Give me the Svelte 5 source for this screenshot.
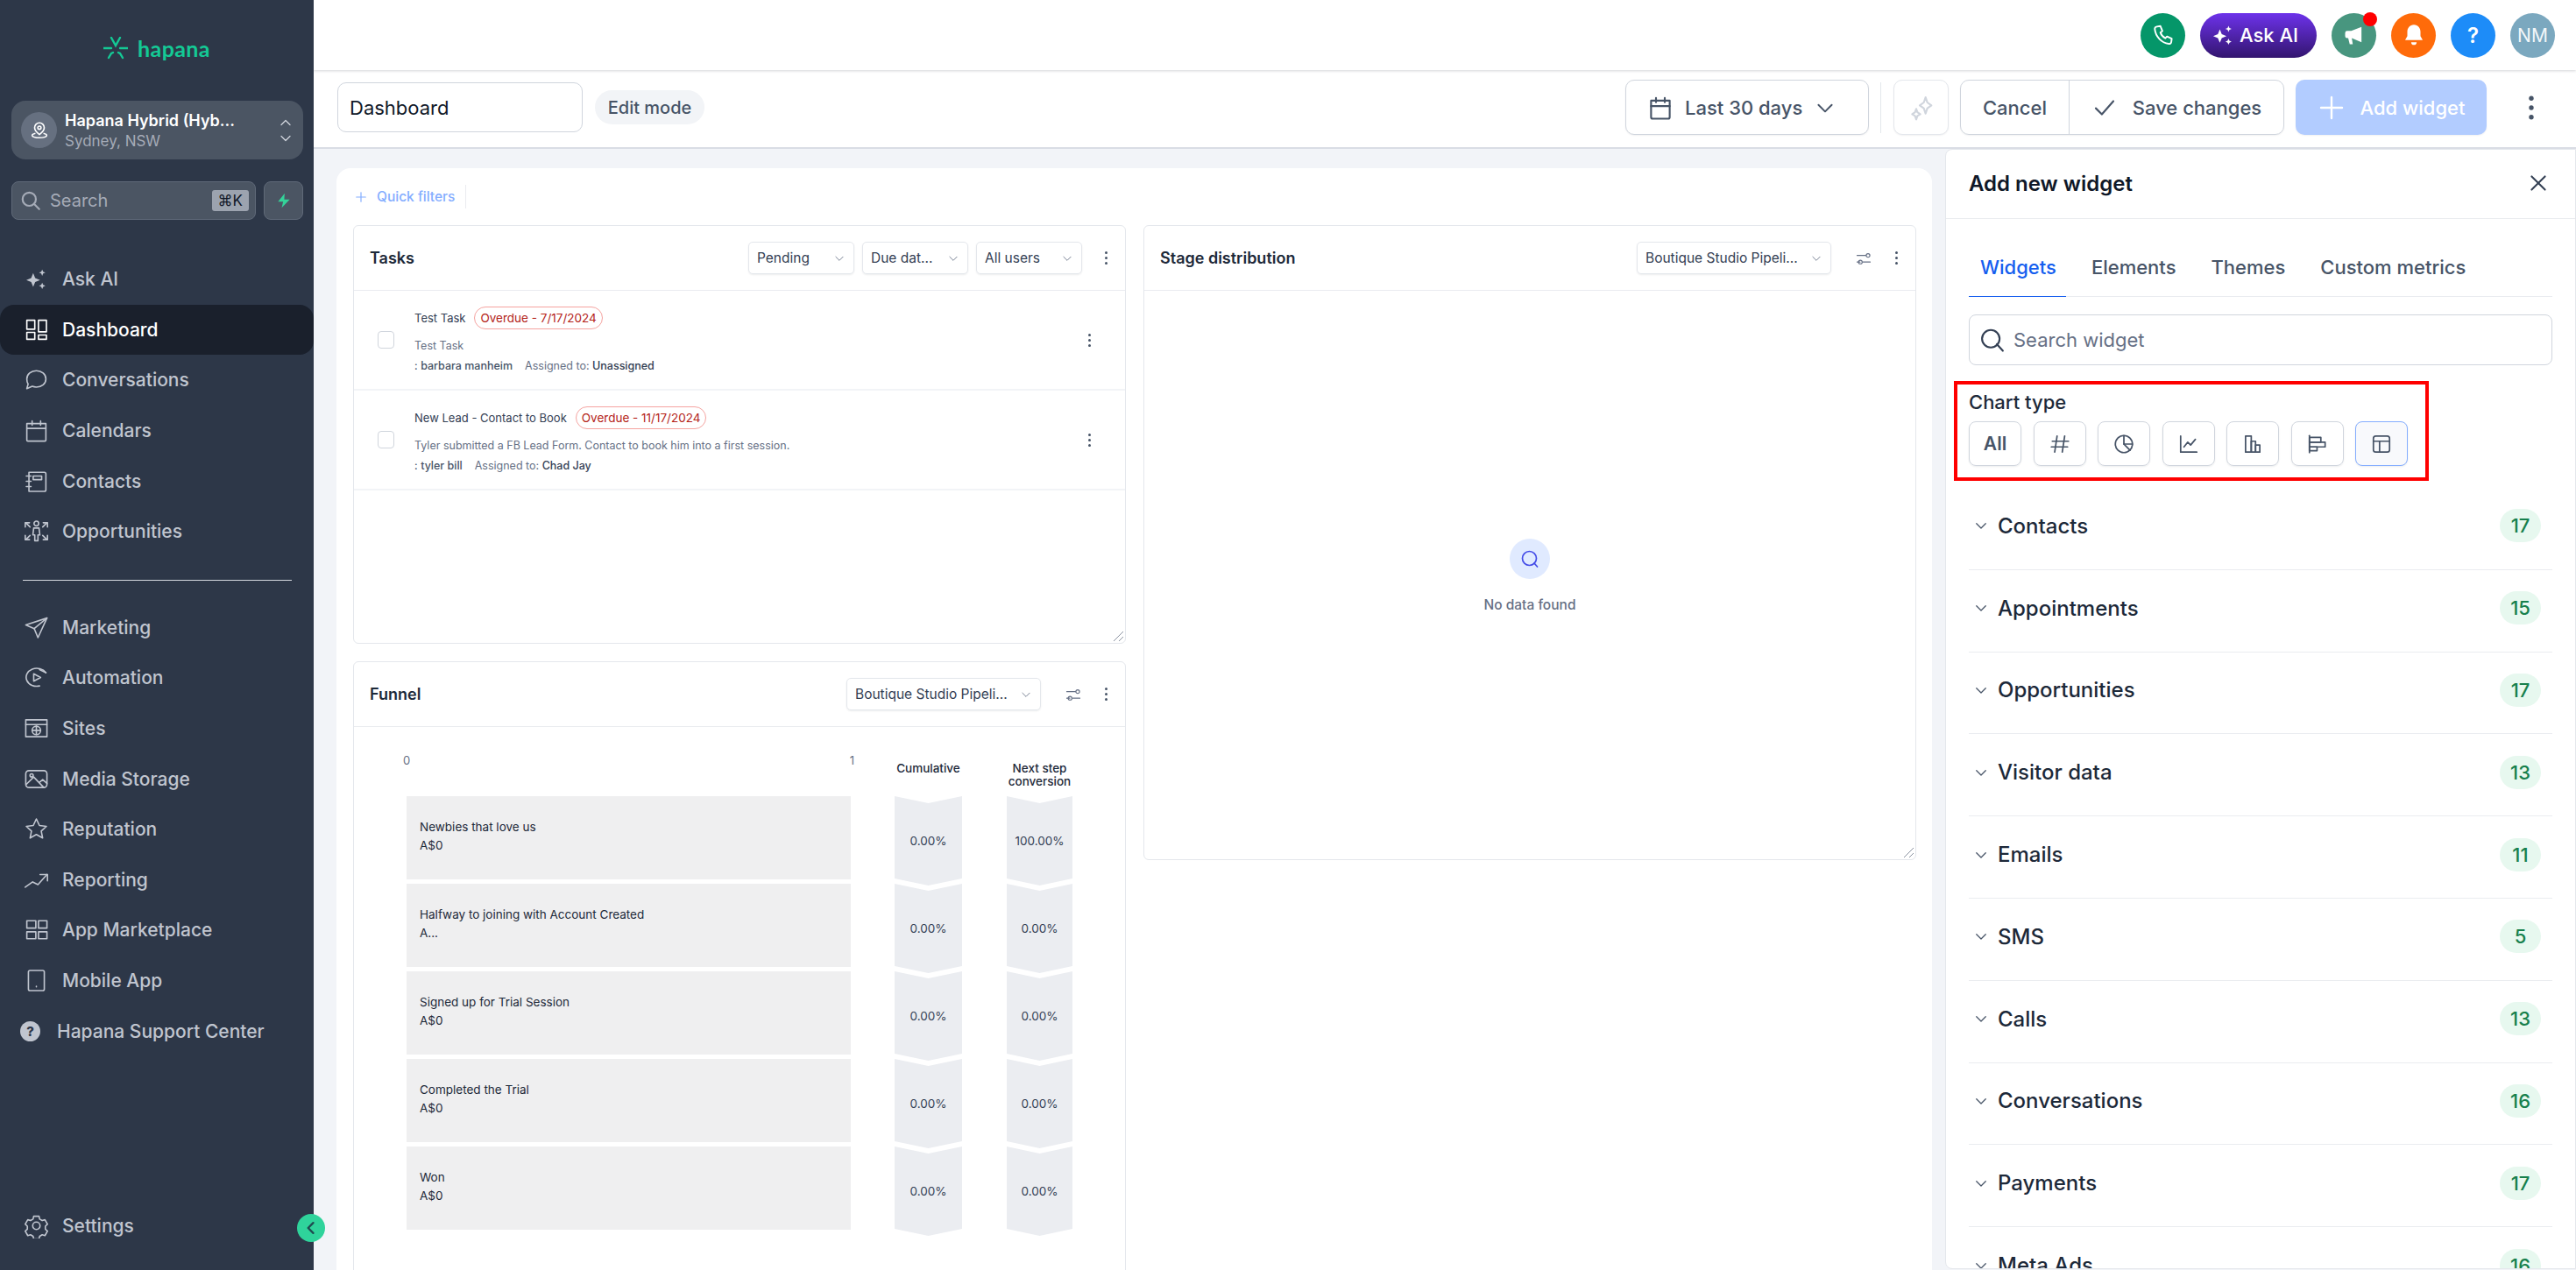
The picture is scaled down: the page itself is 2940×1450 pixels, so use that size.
<script>
  const navTop = [
    { label: "Ask AI", fill: true, paths: ["M9 6.5l1.9 4.6 4.6 1.9-4.6 1.9L9 19.5l-1.9-4.6L2.5 13l4.6-1.9z", "M17.5 3l.9 2.1 2.1.9-2.1.9-.9 2.1-.9-2.1-2.1-.9 2.1-.9z", "M17.5 15.5l.9 2.1 2.1.9-2.1.9-.9 2.1-.9-2.1-2.1-.9 2.1-.9z"] },
    { label: "Dashboard", active: true, paths: ["M3 3h7.5v8.5H3z", "M14 3h7.5v11H14z", "M3 14.5h7.5V21H3z", "M14 17h7.5v4H14z"] },
    { label: "Conversations", paths: ["M12 3.5c5 0 9 3.4 9 7.8s-4 7.7-9 7.7c-1.4 0-2.7-.2-3.9-.7L3 20.5l1.2-4.4C3.400 14.800 3 13.200 3 11.300 3 6.900 7 3.500 12 3.500z"] },
    { label: "Calendars", paths: ["M3 5.500h18v15.500a1 1 0 0 1-1 1H4a1 1 0 0 1-1-1z", "M3 10h18", "M8 3v4", "M16 3v4"] },
    { label: "Contacts", paths: ["M5 3.500h14.500a1.500 1.500 0 0 1 1.500 1.500v15a1.500 1.500 0 0 1-1.500 1.500H5z", "M9 7h8v3.500H9z", "M2.500 7H7", "M2.500 12H7", "M2.500 17H7"] },
    { label: "Opportunities", paths: ["M12 2.500a2.200 2.200 0 1 0 0 4.400 2.200 2.200 0 0 0 0-4.400z", "M9.500 9h5l.8 6.500h-1.800V21h-3v-5.500H8.700z", "M1.500 8V4h4", "M22.500 8V4h-4", "M1.500 16v4h4", "M22.500 16v4h-4", "M2 4l4 4", "M22 4l-4 4", "M2 20l4-4", "M22 20l-4-4"] },
  ];

  const navBottom = [
    { label: "Marketing", paths: ["M22 3L2 9.500l8 3.500 3.500 8.500z", "M22 3L10 13"] },
    { label: "Automation", paths: ["M21 7.500A10 8.500 0 1 0 15 20", "M9.500 8.500l6.500 3.500-6.500 3.500z", "M15 4.500l6 3"] },
    { label: "Sites", paths: ["M2 4h20v16H2z", "M2 8.500h20", "M12 10a4 4 0 1 0 0 8 4 4 0 0 0 0-8z", "M8 14h8", "M12 10v8"] },
    { label: "Media Storage", paths: ["M5 4h14a3 3 0 0 1 3 3v10a3 3 0 0 1-3 3H5a3 3 0 0 1-3-3V7a3 3 0 0 1 3-3z", "M2.500 17l7-7 9.500 10", "M15 15l3-2.500 4 3.500", "M7.500 7a1.500 1.500 0 1 0 0 3 1.500 1.500 0 0 0 0-3z"] },
    { label: "Reputation", paths: ["M12 2.500l2.900 6.200 6.600.8-4.900 4.500 1.300 6.500-5.900-3.300L6.100 20.500l1.300-6.500-4.900-4.500 6.600-.8z"] },
    { label: "Reporting", paths: ["M1.500 19l7-5 5 2.500L22 7", "M15.500 7H22.500V13"] },
    { label: "App Marketplace", paths: ["M3 3.500h8.500v7H3z", "M14 3.500h8v7h-8z", "M3 14h8.500v6.500H3z", "M14 14h8v6.500h-8z"] },
    { label: "Mobile App", paths: ["M6 2.500h12a1.500 1.500 0 0 1 1.500 1.500v16a1.500 1.500 0 0 1-1.500 1.500H6A1.500 1.500 0 0 1 4.500 20V4A1.500 1.500 0 0 1 6 2.500z", "M12 17.500v.5"] },
  ];

  const cog = ["M12 8.500a3.500 3.500 0 1 0 0 7 3.500 3.500 0 0 0 0-7z", "M9.500 3h5l.6 2.700 2.400 1.400 2.600-.8 2.400 4.200-2 1.900v2.800l2 1.900-2.400 4.200-2.600-.8-2.400 1.400-.6 2.600h-5l-.6-2.600-2.400-1.400-2.600.8-2.400-4.200 2-1.900v-2.800l-2-1.900 2.400-4.200 2.600.8 2.400-1.400z"];

  const chartIcons = [
    ["M9 3.500L6.500 20.500", "M17 3.500l-2.500 17", "M4 9h17", "M3 15h17"],
    ["M12 3a9 9 0 1 0 9 9h-9z", "M12 3a9 9 0 0 1 9 9", "M12 12l6.500 6.500"],
    ["M3.500 3.500v17h17", "M7 15l4-5 3 3 5-6"],
    ["M4.500 3.500h6v17h-6z", "M10.500 9h4.500v11.500h-4.500z", "M15 13h4.500v7.500H15z"],
    ["M3.500 3v18", "M3.500 5h12v5h-12z", "M3.500 10h16.500v5H3.500z", "M3.500 15h8v4h-8z"],
    ["M6 3.500h12A2.500 2.500 0 0 1 20.500 6v12a2.500 2.500 0 0 1-2.500 2.500H6A2.500 2.500 0 0 1 3.500 18V6A2.500 2.500 0 0 1 6 3.500z", "M3.500 9h17", "M10 9v11.500"],
  ];

  const sections = [
    ["Contacts", 17], ["Appointments", 15], ["Opportunities", 17], ["Visitor data", 13], ["Emails", 11],
    ["SMS", 5], ["Calls", 13], ["Conversations", 16], ["Payments", 17], ["Meta Ads", 16],
  ];

  const funnel = [
    { name: "Newbies that love us", value: "A$0", next: "100.00%" },
    { name: "Halfway to joining with Account Created", value: "A...", next: "0.00%" },
    { name: "Signed up for Trial Session", value: "A$0", next: "0.00%" },
    { name: "Completed the Trial", value: "A$0", next: "0.00%" },
    { name: "Won", value: "A$0", next: "0.00%" },
  ];

  const tasks = [
    { title: "Test Task", due: "Overdue - 7/17/2024", desc: "Test Task", who: "barbara manheim", to: "Unassigned" },
    { title: "New Lead - Contact to Book", due: "Overdue - 11/17/2024", desc: "Tyler submitted a FB Lead Form. Contact to book him into a first session.", who: "tyler bill", to: "Chad Jay" },
  ];

  const sliders = ["M3 8h12", "M3 17h4", "M11 17h10", "M18 5.500a2.500 2.500 0 1 0 0 5 2.500 2.500 0 0 0 0-5z", "M7.500 14.500a2.500 2.500 0 1 0 0 5 2.500 2.500 0 0 0 0-5z"];
  const calendar = ["M3.500 5.500h17v15a1.500 1.500 0 0 1-1.500 1.500H5a1.500 1.500 0 0 1-1.500-1.500z", "M3.500 10.500h17", "M8 3v4", "M16 3v4"];
</script>

{#snippet icon(paths, size = 24, sw = 1.6, fill = false)}
  <svg class="ico" width={size} height={size} viewBox="0 0 24 24" fill={fill ? "currentColor" : "none"} stroke={fill ? "none" : "currentColor"} stroke-width={sw} stroke-linecap="round" stroke-linejoin="round">
    {#each paths as d}<path {d} />{/each}
  </svg>
{/snippet}

{#snippet chevron(size = 14, sw = 1.5)}
  {@render icon(["M5 9l7 7 7-7"], size, sw)}
{/snippet}

{#snippet kebab()}
  <span class="kebab"><i></i><i></i><i></i></span>
{/snippet}

{#snippet navRow(item)}
  <div class="nav-item" class:active={item.active}>
    <span class="nav-icon">{@render icon(item.paths, 29, 1.35, item.fill)}</span>
    <span>{item.label}</span>
  </div>
{/snippet}

<div class="app">
  <aside class="sidebar">
    <div class="logo">
      <svg width="28" height="26" viewBox="0 0 28 26" fill="none" stroke="#14c995" stroke-width="2.400" stroke-linecap="round">
        <path d="M0 13h9" /><path d="M19 13h9" /><path d="M9 1l5 9 5-9" /><path d="M6 24l3-5 2-1" /><path d="M22 24l-3-5-2-1" />
      </svg>
      <span>hapana</span>
    </div>

    <div class="location">
      <span class="loc-avatar">
        <svg width="22" height="22" viewBox="0 0 24 24" fill="none" stroke="#fff" stroke-width="1.800" stroke-linejoin="round">
          <path d="M12 2.500a6 6 0 0 1 6 6c0 4-6 8.500-6 8.500s-6-4.500-6-8.500a6 6 0 0 1 6-6z" />
          <circle cx="12" cy="8.500" r="2" />
          <path d="M7 15.500c-3 .8-4.500 1.800-4 3 .6 1.400 4 2.500 9 2.500s8.400-1.100 9-2.500c.5-1.200-1-2.200-4-3" />
        </svg>
      </span>
      <div class="loc-text">
        <strong>Hapana Hybrid (Hyb...</strong>
        <span>Sydney, NSW</span>
      </div>
      <span class="loc-caret">
        {@render icon(["M6 15l6-6 6 6"], 20, 1.500)}
        {@render icon(["M6 9l6 6 6-6"], 20, 1.500)}
      </span>
    </div>

    <div class="search-row">
      <div class="side-search">
        {@render icon(["M10.500 3.500a7 7 0 1 0 0 14 7 7 0 0 0 0-14z", "M15.500 15.500l5.500 5.500"], 26, 2)}
        <span class="side-search-text">Search</span>
        <kbd>⌘K</kbd>
      </div>
      <div class="bolt">
        <svg width="20" height="20" viewBox="0 0 24 24" fill="#34d399"><path d="M13 2L4 13.500h7L9 22l11-11.500h-7.500z" /></svg>
      </div>
    </div>

    <nav class="nav first">
      {#each navTop as item}{@render navRow(item)}{/each}
    </nav>
    <div class="nav-divider"></div>
    <nav class="nav">
      {#each navBottom as item}{@render navRow(item)}{/each}
      <div class="nav-item">
        <span class="nav-icon help-icon">?</span>
        <span>Hapana Support Center</span>
      </div>
    </nav>

    <div class="nav settings">
      {@render navRow({ label: "Settings", paths: cog })}
    </div>
    <span class="collapse">{@render icon(["M15 5l-7 7 7 7"], 20, 2.800)}</span>
  </aside>

  <div class="main">
    <header class="topbar">
      <span class="round green">{@render icon(["M6 3l3.500-.5 2 5-2 1.500c.8 2.500 2.500 4.500 5 5.800l1.700-1.800 4.800 2.200-.5 3.500c-.2 1.200-1.300 2-2.500 1.800C10.500 19.500 4.500 13 3.800 5.500 3.700 4.300 4.800 3.200 6 3z"], 27, 1.700)}</span>
      <span class="ask-ai">
        {@render icon(navTop[0].paths, 28, 1, true)}
        Ask AI
      </span>
      <span class="round teal">
        {@render icon(["M19 4L9 8H5a2 2 0 0 0-2 2v3a2 2 0 0 0 2 2h1l1.500 6h3L9.500 15l9.500 4z", "M22 10v3"], 28, 1, true)}
        <b class="dot"></b>
      </span>
      <span class="round orange">{@render icon(["M12 2.500c-3.800 0-6 3-6 6.500v4l-2 3.500h16L18 13V9c0-3.500-2.200-6.500-6-6.500z", "M9.500 18.500h5a2.500 2.500 0 0 1-5 0z"], 30, 1, true)}</span>
      <span class="round blue">?</span>
      <span class="round avatar">NM</span>
    </header>

    <div class="toolbar">
      <div class="title-input">Dashboard</div>
      <span class="edit-pill">Edit mode</span>
      <div class="toolbar-spacer"></div>
      <div class="btn date">
        {@render icon(calendar, 30, 1.700)}
        <span>Last 30 days</span>
        {@render chevron(26, 1.800)}
      </div>
      <span class="tool-divider"></span>
      <div class="btn sparkle">
        <svg width="32" height="32" viewBox="0 0 24 24" fill="none" stroke="#d0d5dd" stroke-width="1.600" stroke-linejoin="round">
          <path d="M15.500 3l1.500 4.500L20.500 10 17 12.500 15.500 17 14 12.500 10.500 10 14 7.500z" />
          <path d="M7.500 13l1 2.800L11 17.500 8.500 19l-1 3-1-3L4 17.500l2.500-1.700z" />
        </svg>
      </div>
      <div class="btn-group">
        <div class="btn-part cancel">Cancel</div>
        <div class="btn-part">
          {@render icon(["M4 12.500l5.500 5.500L20 6"], 30, 1.700)}
          Save changes
        </div>
      </div>
      <div class="btn-add">
        {@render icon(["M12 3v18", "M3 12h18"], 32, 1.800)}
        Add widget
      </div>
      <span class="toolbar-kebab">{@render kebab()}</span>
    </div>

    <div class="body">
      <section class="canvas">
        <div class="quick">
          <span class="quick-label">{@render icon(["M12 5v14", "M5 12h14"], 18, 1.600)} Quick filters</span>
          <span class="quick-sep"></span>
        </div>
        <div class="grid">
          <div class="col">
            <article class="card tasks-card">
              <div class="card-head">
                <h3>Tasks</h3>
                <span class="sel s1"><span>Pending</span>{@render chevron()}</span>
                <span class="sel s2"><span>Due dat...</span>{@render chevron()}</span>
                <span class="sel s3"><span>All users</span>{@render chevron()}</span>
                <span class="head-kebab">{@render kebab()}</span>
              </div>
              {#each tasks as t}
                <div class="task">
                  <span class="check"></span>
                  <div class="task-body">
                    <div class="task-title">{t.title}<span class="due">{t.due}</span></div>
                    <div class="task-desc">{t.desc}</div>
                    <div class="task-meta">: <b>{t.who}</b><span class="assigned">Assigned to: <b>{t.to}</b></span></div>
                  </div>
                  {@render kebab()}
                </div>
              {/each}
              <svg class="resize" width="14" height="14" viewBox="0 0 14 14" stroke="#8a92a0" stroke-width="1"><path d="M13 2L2 13" /><path d="M13 8l-5 5" /></svg>
            </article>

            <article class="card funnel-card">
              <div class="card-head">
                <h3>Funnel</h3>
                <span class="sel pipe"><span>Boutique Studio Pipeli...</span>{@render chevron()}</span>
                <span class="head-icon">{@render icon(sliders, 20, 1.400)}</span>
                <span class="head-kebab">{@render kebab()}</span>
              </div>
              <div class="funnel">
                <div class="funnel-bars">
                  <div class="axis"><span>0</span><span>1</span></div>
                  {#each funnel as f}
                    <div class="bar"><span>{f.name}</span><span>{f.value}</span></div>
                  {/each}
                </div>
                <div class="step-col">
                  <div class="step-head">Cumulative</div>
                  {#each funnel as f}
                    <div class="step">0.00%</div>
                  {/each}
                </div>
                <div class="step-col next">
                  <div class="step-head">Next step<br />conversion</div>
                  {#each funnel as f}
                    <div class="step">{f.next}</div>
                  {/each}
                </div>
              </div>
            </article>
          </div>

          <article class="card stage-card">
            <div class="card-head">
              <h3>Stage distribution</h3>
              <span class="sel pipe"><span>Boutique Studio Pipeli...</span>{@render chevron()}</span>
              <span class="head-icon">{@render icon(sliders, 20, 1.400)}</span>
              <span class="head-kebab">{@render kebab()}</span>
            </div>
            <div class="empty">
              <span class="empty-icon">{@render icon(["M11.500 3.500a8 8 0 1 0 0 16 8 8 0 0 0 0-16z", "M17 17l3.500 4"], 24, 1.700)}</span>
              <span class="empty-text">No data found</span>
            </div>
            <svg class="resize" width="14" height="14" viewBox="0 0 14 14" stroke="#8a92a0" stroke-width="1"><path d="M13 2L2 13" /><path d="M13 8l-5 5" /></svg>
          </article>
        </div>
      </section>

      <aside class="panel">
        <div class="panel-head">
          <h2>Add new widget</h2>
          {@render icon(["M5 5l14 14", "M19 5L5 19"], 26, 1.900)}
        </div>
        <div class="panel-body">
          <div class="tabs">
            <span class="tab on">Widgets</span>
            <span class="tab">Elements</span>
            <span class="tab">Themes</span>
            <span class="tab">Custom metrics</span>
          </div>
          <div class="widget-search">
            {@render icon(["M10.500 3a8 8 0 1 0 0 16 8 8 0 0 0 0-16z", "M16 16l5.500 6"], 30, 1.700)}
            <span>Search widget</span>
          </div>
          <div class="chart-type">
            <div class="chart-label">Chart type</div>
            <div class="chart-btns">
              <span class="chart-btn">All</span>
              {#each chartIcons as p, i}
                <span class="chart-btn" class:picked={i === 5}>{@render icon(p, 26, 1.600)}</span>
              {/each}
            </div>
          </div>
          <div class="sections">
            {#each sections as [name, count]}
              <div class="section">
                {@render chevron(18, 1.700)}
                <span class="section-name">{name}</span>
                <span class="count">{count}</span>
              </div>
            {/each}
          </div>
        </div>
      </aside>
    </div>
  </div>
</div>

<style>
  :global(body) {
    margin: 0;
    font-family: Inter, "Liberation Sans", sans-serif;
    color: #101828;
  }

  .ico {
    display: block;
    flex: none;
  }

  .app {
    display: flex;
    width: 2940px;
    height: 1450px;
    overflow: hidden;
    background: #f2f4f8;
  }

  /* sidebar */
  .sidebar {
    position: relative;
    flex: 0 0 358px;
    background: #2d3748;
    box-sizing: border-box;
    display: flex;
    flex-direction: column;
    z-index: 2;
  }

  .logo {
    display: flex;
    align-items: center;
    justify-content: center;
    gap: 11px;
    height: 115px;
    padding-bottom: 6px;
    box-sizing: border-box;
    color: #14c995;
    font-family: Lato, Inter, sans-serif;
    font-weight: 700;
    font-size: 25px;
    letter-spacing: 0.4px;
  }

  .location {
    display: flex;
    align-items: center;
    margin: 0 12px 0 13px;
    height: 67px;
    padding: 0 14px 0 11px;
    background: #4b5563;
    border-radius: 16px;
  }

  .loc-avatar {
    flex: none;
    width: 41px;
    height: 41px;
    border-radius: 50%;
    background: #667080;
    display: flex;
    align-items: center;
    justify-content: center;
  }

  .loc-text {
    flex: 1;
    margin-left: 9px;
    display: flex;
    flex-direction: column;
    min-width: 0;
  }

  .loc-text strong {
    color: #fff;
    font-size: 18px;
    font-weight: 600;
    line-height: 24px;
    white-space: nowrap;
  }

  .loc-text span {
    color: #a5abb7;
    font-size: 17px;
    line-height: 22px;
  }

  .loc-caret {
    display: flex;
    flex-direction: column;
    color: #d0d5dd;
    margin-right: -4px;
    gap: 0;
  }

  .loc-caret :global(svg) {
    margin: -1px 0;
  }

  .search-row {
    display: flex;
    gap: 9px;
    margin: 25px 12px 0 13px;
    height: 44px;
  }

  .side-search {
    flex: 1;
    display: flex;
    align-items: center;
    box-sizing: border-box;
    background: #4b5563;
    border: 1px solid #5f6978;
    border-radius: 8px;
    padding: 0 7px 0 8px;
    color: #a5abb7;
  }

  .side-search-text {
    flex: 1;
    margin-left: 9px;
    font-size: 20px;
  }

  kbd {
    background: #9ca3af;
    color: #101828;
    font-family: Inter, "DejaVu Sans", sans-serif;
    font-size: 17px;
    border-radius: 3px;
    padding: 2px 7px;
  }

  .bolt {
    flex: 0 0 45px;
    box-sizing: border-box;
    background: #4b5563;
    border: 1px solid #5f6978;
    border-radius: 8px;
    display: flex;
    align-items: center;
    justify-content: center;
  }

  .nav {
    display: flex;
    flex-direction: column;
    gap: 0;
  }

  .nav.first {
    margin-top: 39px;
  }

  .nav-item {
    display: flex;
    align-items: center;
    height: 57.600px;
    padding-left: 27px;
    gap: 15px;
    color: #c0c5cf;
    font-size: 21px;
    font-weight: 500;
    border-radius: 16px;
  }

  .nav-item.active {
    background: #1a202c;
    color: #fff;
  }

  .nav-icon {
    width: 29px;
    display: flex;
    justify-content: center;
  }

  .help-icon {
    margin-left: -4px;
    margin-right: 4px;
    flex: none;
    width: 23px;
    height: 23px;
    box-sizing: border-box;
    border-radius: 50%;
    background: #c0c5cf;
    color: #2d3748;
    font-size: 15px;
    font-weight: 800;
    align-items: center;
  }

  .nav-divider {
    height: 1px;
    margin: 26px 25px 25px 26px;
    background: #d5d9e0;
  }

  .settings {
    margin-top: auto;
    margin-bottom: 22px;
  }

  .collapse {
    position: absolute;
    left: 339px;
    top: 1386px;
    width: 32px;
    height: 32px;
    border-radius: 50%;
    background: #2fd39b;
    color: #1f4b50;
    display: flex;
    align-items: center;
    justify-content: center;
  }

  /* main column */
  .main {
    flex: 1;
    min-width: 0;
    display: flex;
    flex-direction: column;
  }

  .topbar {
    flex: 0 0 80px;
    box-sizing: border-box;
    background: #fff;
    box-shadow: 0 1px 3px rgba(16, 24, 40, 0.18);
    display: flex;
    align-items: center;
    justify-content: flex-end;
    gap: 17px;
    padding-right: 24px;
    position: relative;
    z-index: 1;
  }

  .round {
    position: relative;
    width: 51px;
    height: 51px;
    border-radius: 50%;
    display: flex;
    align-items: center;
    justify-content: center;
    color: #fff;
    font-size: 21px;
  }

  .green {
    background: #059669;
  }

  .teal {
    background: #48967f;
  }

  .orange {
    background: #ff6b0a;
  }

  .blue {
    background: #1d8cf8;
    font-weight: 600;
    font-size: 24px;
  }

  .avatar {
    background: #7ba8bf;
    color: #f2f6f9;
  }

  .dot {
    position: absolute;
    top: -1px;
    right: -1px;
    width: 16px;
    height: 16px;
    border-radius: 50%;
    background: #f00;
  }

  .ask-ai {
    display: flex;
    align-items: center;
    gap: 5px;
    height: 51px;
    width: 133px;
    box-sizing: border-box;
    padding-left: 12px;
    border-radius: 26px;
    color: #fff;
    font-size: 22px;
    font-weight: 500;
    background: linear-gradient(180deg, #6d32ea 0%, #33156f 100%);
  }

  .toolbar {
    flex: 0 0 90px;
    box-sizing: border-box;
    background: #fff;
    border-bottom: 2px solid #d9dde5;
    display: flex;
    align-items: center;
    padding: 0 0 3px 27px;
  }

  .title-input {
    box-sizing: border-box;
    width: 280px;
    height: 57px;
    border: 1px solid #d0d5dd;
    border-radius: 10px;
    padding-left: 13px;
    display: flex;
    align-items: center;
    font-size: 22px;
    color: #101828;
  }

  .edit-pill {
    margin-left: 14px;
    height: 39px;
    width: 125px;
    border-radius: 20px;
    background: #f2f4f7;
    color: #475467;
    font-size: 20px;
    font-weight: 500;
    display: flex;
    align-items: center;
    justify-content: center;
  }

  .toolbar-spacer {
    flex: 1;
  }

  .btn {
    box-sizing: border-box;
    height: 63px;
    border: 1px solid #d0d5dd;
    border-radius: 10px;
    display: flex;
    align-items: center;
    background: #fff;
    color: #475467;
    font-size: 22px;
    font-weight: 500;
    box-shadow: 0 1px 2px rgba(16, 24, 40, 0.06);
  }

  .date {
    width: 278px;
    padding-left: 24px;
    gap: 13px;
  }

  .tool-divider {
    width: 1px;
    height: 58px;
    margin: 0 14px 0 13px;
    background: #e4e7ec;
  }

  .sparkle {
    width: 63px;
    justify-content: center;
    border-color: #e4e7ec;
  }

  .btn-group {
    margin-left: 13px;
    box-sizing: border-box;
    width: 370px;
    height: 63px;
    display: flex;
    border: 1px solid #d0d5dd;
    border-radius: 10px;
    color: #475467;
    font-size: 22px;
    font-weight: 500;
    box-shadow: 0 1px 2px rgba(16, 24, 40, 0.06);
  }

  .btn-part {
    flex: 1;
    display: flex;
    align-items: center;
    justify-content: center;
    gap: 17px;
  }

  .btn-part.cancel {
    flex: 0 0 123px;
    border-right: 1px solid #d0d5dd;
  }

  .btn-add {
    margin-left: 13px;
    width: 218px;
    height: 63px;
    border-radius: 10px;
    background: #b2ccff;
    color: #fff;
    font-size: 22px;
    font-weight: 500;
    display: flex;
    align-items: center;
    justify-content: center;
    gap: 17px;
    box-shadow: 0 1px 2px rgba(16, 24, 40, 0.06);
  }

  .toolbar-kebab {
    width: 102px;
    display: flex;
    justify-content: center;
    transform: scale(1.350);
  }

  .kebab {
    flex: none;
    display: flex;
    flex-direction: column;
    gap: 4px;
    width: 4px;
  }

  .kebab i {
    display: block;
    width: 4px;
    height: 4px;
    border-radius: 50%;
    background: #475467;
  }

  .body {
    flex: 1;
    min-height: 0;
    display: flex;
  }

  .canvas {
    flex: 0 0 1821px;
    box-sizing: border-box;
    margin: 22px 15px 0 26px;
    background: #fff;
    border-radius: 16px 16px 0 0;
    padding: 0 18px 0 19px;
  }

  .quick {
    height: 65px;
    display: flex;
    align-items: flex-start;
    gap: 12px;
    padding-top: 19px;
    box-sizing: border-box;
  }

  .quick-label {
    display: flex;
    align-items: center;
    gap: 9px;
    height: 27px;
    color: #84adff;
    font-size: 15.500px;
    font-weight: 500;
  }

  .quick-sep {
    width: 1px;
    height: 27px;
    background: #eaecf0;
  }

  .grid {
    display: grid;
    grid-template-columns: 882px 882px;
    gap: 20px;
    align-items: start;
  }

  .col {
    display: flex;
    flex-direction: column;
    gap: 20px;
  }

  .card {
    position: relative;
    box-sizing: border-box;
    border: 1px solid #e4e7ec;
    border-radius: 6px;
    background: #fff;
  }

  .tasks-card {
    height: 478px;
  }

  .stage-card {
    height: 725px;
    display: flex;
    flex-direction: column;
  }

  .funnel-card {
    height: 760px;
  }

  .card-head {
    height: 74px;
    box-sizing: border-box;
    display: flex;
    align-items: center;
    padding: 0 19px 0 18px;
    border-bottom: 1px solid #eaecf0;
  }

  .card-head h3 {
    flex: 1;
    margin: 0;
    font-size: 18px;
    font-weight: 600;
    color: #1d2939;
  }

  .sel {
    box-sizing: border-box;
    height: 37px;
    margin-left: 9px;
    padding: 0 9px;
    border: 1px solid #e4e7ec;
    border-radius: 5px;
    box-shadow: 0 1px 2px rgba(16, 24, 40, 0.08);
    display: flex;
    align-items: center;
    justify-content: space-between;
    font-size: 15.500px;
    color: #344054;
    white-space: nowrap;
  }

  .sel :global(svg) {
    color: #667085;
  }

  .s1 {
    width: 121px;
  }

  .s2,
  .s3 {
    width: 121px;
  }

  .pipe {
    width: 222px;
  }

  .head-kebab {
    margin-left: 26px;
  }

  .head-kebab .kebab,
  .task .kebab {
    gap: 3px;
  }

  .head-kebab :global(i),
  .task :global(i) {
    width: 3px;
    height: 3px;
  }

  .head-icon {
    margin-left: 27px;
    color: #667085;
  }

  .head-icon + .head-kebab {
    margin-left: 26px;
  }

  .task {
    height: 114px;
    box-sizing: border-box;
    display: flex;
    align-items: center;
    padding: 0 38px 0 27px;
    border-bottom: 2px solid #f2f4f7;
  }

  .check {
    flex: none;
    width: 19px;
    height: 20px;
    box-sizing: border-box;
    border: 1px solid #d0d5dd;
    border-radius: 4px;
    margin-right: 23px;
    margin-top: 0;
  }

  .task-body {
    flex: 1;
    display: flex;
    flex-direction: column;
  }

  .task-title {
    display: flex;
    align-items: center;
    height: 26px;
    font-size: 13px;
    color: #344054;
  }

  .due {
    margin-left: 10px;
    height: 26px;
    box-sizing: border-box;
    padding: 0 6px;
    display: flex;
    align-items: center;
    border: 1px solid #f5a3a0;
    border-radius: 13px;
    color: #b42318;
    font-size: 13.500px;
  }

  .task-desc {
    margin-top: 10px;
    font-size: 12.500px;
    line-height: 18px;
    color: #667085;
  }

  .task-meta {
    margin-top: 5px;
    font-size: 12.500px;
    line-height: 18px;
    color: #475467;
  }

  .task-meta b {
    font-weight: 500;
  }

  .assigned {
    margin-left: 14px;
    color: #667085;
  }

  .assigned b {
    color: #344054;
  }

  .resize {
    position: absolute;
    right: 1px;
    bottom: 1px;
  }

  .funnel {
    display: flex;
    padding-top: 26px;
    padding-left: 60px;
  }

  .funnel-bars {
    width: 507px;
  }

  .axis {
    display: flex;
    justify-content: space-between;
    height: 53px;
    margin: 0 -4px;
    font-size: 13px;
    color: #667085;
    line-height: 25px;
  }

  .bar {
    box-sizing: border-box;
    height: 95px;
    margin-bottom: 5px;
    background: #efeff0;
    padding: 27px 0 0 15px;
    display: flex;
    flex-direction: column;
    gap: 5px;
    font-size: 13.500px;
    line-height: 16px;
    color: #1d2939;
  }

  .step-col {
    width: 77px;
    margin-left: 50px;
    text-align: center;
  }

  .step-col.next {
    width: 75px;
    margin-left: 51px;
  }

  .step-head {
    height: 53px;
    margin: 0 -20px;
    padding-top: 14px;
    box-sizing: border-box;
    font-size: 13.500px;
    font-weight: 500;
    line-height: 15px;
    color: #1d2939;
  }

  .step {
    height: 102px;
    margin-bottom: -2px;
    background: #ebedf1;
    clip-path: polygon(0 0, 50% 8px, 100% 0, 100% calc(100% - 8px), 50% 100%, 0 calc(100% - 8px));
    display: flex;
    align-items: center;
    justify-content: center;
    font-size: 13.500px;
    color: #344054;
  }

  .empty {
    flex: 1;
    display: flex;
    flex-direction: column;
    align-items: center;
    padding-top: 283px;
    box-sizing: border-box;
    min-height: 0;
  }

  .empty-icon {
    width: 46px;
    height: 46px;
    border-radius: 50%;
    background: #e0eaff;
    color: #444ce7;
    display: flex;
    align-items: center;
    justify-content: center;
  }

  .empty-text {
    margin-top: 20px;
    font-size: 15.500px;
    font-weight: 500;
    color: #667085;
  }

  /* right panel */
  .panel {
    flex: 0 0 720px;
    box-sizing: border-box;
    border: 1px solid #e4e7ec;
    border-radius: 8px 0 0 8px;
    background: #fff;
    margin-bottom: 1px;
    overflow: hidden;
  }

  .panel-head {
    height: 79px;
    box-sizing: border-box;
    display: flex;
    align-items: center;
    justify-content: space-between;
    padding: 0 29px 2px 26px;
    border-bottom: 1px solid #eaecf0;
    color: #344054;
  }

  .panel-head h2 {
    margin: 0;
    font-size: 24px;
    font-weight: 600;
    color: #101828;
  }

  .panel-body {
    padding: 0 26px;
  }

  .tabs {
    display: flex;
    gap: 40px;
    height: 89px;
    box-sizing: border-box;
    border-bottom: 1px solid #eaecf0;
    align-items: flex-end;
    padding-left: 13px;
    font-size: 22px;
    font-weight: 500;
    color: #475467;
  }

  .tab {
    height: 46px;
    box-sizing: border-box;
  }

  .tab.on {
    color: #155eef;
    position: relative;
  }

  .tab.on::after {
    content: "";
    position: absolute;
    left: -13px;
    right: -11px;
    bottom: -1px;
    height: 1px;
    background: #155eef;
  }

  .widget-search {
    margin-top: 20px;
    height: 58px;
    box-sizing: border-box;
    border: 1px solid #d0d5dd;
    border-radius: 8px;
    display: flex;
    align-items: center;
    gap: 9px;
    padding-left: 11px;
    color: #667085;
    font-size: 22px;
  }

  .widget-search :global(svg) {
    color: #344054;
  }

  .chart-type {
    position: relative;
    margin-top: 18px;
    height: 114px;
    box-sizing: border-box;
    padding-top: 10px;
  }

  .chart-type::before {
    content: "";
    position: absolute;
    left: -17px;
    top: 0;
    width: 542px;
    height: 114px;
    box-sizing: border-box;
    border: 4px solid #f00;
  }

  .chart-label {
    font-size: 22px;
    font-weight: 500;
    line-height: 28px;
    color: #1d2939;
  }

  .chart-btns {
    display: flex;
    gap: 13.500px;
    margin-top: 8px;
  }

  .chart-btn {
    flex: none;
    box-sizing: border-box;
    width: 60px;
    height: 51px;
    border: 1px solid #d0d5dd;
    border-radius: 8px;
    box-shadow: 0 1px 2px rgba(16, 24, 40, 0.08);
    display: flex;
    align-items: center;
    justify-content: center;
    color: #475467;
    font-size: 21px;
    font-weight: 600;
  }

  .chart-btn.picked {
    border-color: #84adff;
    background: #f8f9fc;
  }

  .sections {
    margin-top: 8px;
  }

  .section {
    height: 93.800px;
    box-sizing: border-box;
    display: flex;
    align-items: center;
    padding: 0 13px 6px 5px;
    border-bottom: 1px solid #eaecf0;
    color: #475467;
  }

  .section-name {
    flex: 1;
    margin-left: 10px;
    font-size: 24px;
    font-weight: 500;
    color: #1d2939;
  }

  .count {
    width: 47px;
    height: 38px;
    border-radius: 19px;
    background: #e7f8ef;
    color: #17804d;
    font-size: 22px;
    font-weight: 500;
    display: flex;
    align-items: center;
    justify-content: center;
  }
</style>
